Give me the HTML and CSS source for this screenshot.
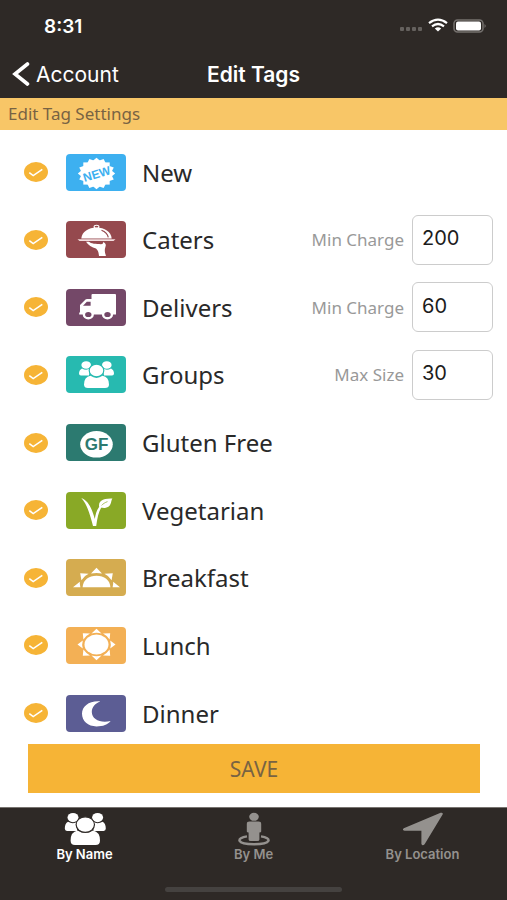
FILE: index.html
```html
<!DOCTYPE html>
<html lang="en">
<head>
  <meta charset="UTF-8">
  <meta name="viewport" content="width=device-width, initial-scale=1">
  <title>Edit Tags</title>
  <link rel="stylesheet" href="styles.css">
</head>
<body>

  <header class="header">
    <div class="status-bar">
      <span class="time">8:31</span>
      <svg class="status-icons" width="88" height="16" viewBox="0 0 88 16">
        <g fill="#65615e">
          <rect x="1" y="9" width="4" height="4" rx="1"/>
          <rect x="7" y="9" width="4" height="4" rx="1"/>
          <rect x="13" y="9" width="4" height="4" rx="1"/>
          <rect x="19" y="9" width="4" height="4" rx="1"/>
        </g>
        <g fill="none" stroke="#fff" stroke-width="2.2">
          <path d="M30 5.2 Q39 -1.8 48 5.2"/>
          <path d="M33 8.4 Q39 3.6 45 8.4"/>
        </g>
        <path d="M35.8 10.4 Q39 8 42.2 10.4 L39 13.4 Z" fill="#fff"/>
        <rect x="55" y="2" width="29" height="12" rx="3.5" fill="#2e2926" stroke="#75716e" stroke-width="1.5"/>
        <rect x="57" y="3.6" width="25" height="8.8" rx="2" fill="#fff"/>
        <path d="M85.5 6 Q88 8 85.5 10 Z" fill="#75716e"/>
      </svg>
    </div>
    <nav class="nav-bar">
      <a class="back" href="#account">
        <svg width="18" height="24" viewBox="0 0 18 24">
          <path d="M15.5 2 L3 12 L15.5 22" fill="none" stroke="#fff" stroke-width="3.6" stroke-linecap="round"/>
        </svg>
        <span>Account</span>
      </a>
      <h1>Edit Tags</h1>
    </nav>
  </header>

  <h2 class="section-title">Edit Tag Settings</h2>

  <form class="form">
    <div class="tag-list">

      <div class="tag-row">
        <span class="check">
          <input type="checkbox" id="new" checked>
          <svg viewBox="0 0 24 20"><path d="M5.3 10.6 L9.2 13.6 L18.3 7.4"/></svg>
        </span>
        <svg class="tag-icon new" viewBox="0 0 60 37">
          <g transform="translate(30.5 19.5) scale(1 .84)" fill="#fff">
            <rect x="-13.2" y="-13.2" width="26.4" height="26.4"/>
            <rect x="-13.2" y="-13.2" width="26.4" height="26.4" transform="rotate(22.5)"/>
            <rect x="-13.2" y="-13.2" width="26.4" height="26.4" transform="rotate(45)"/>
            <rect x="-13.2" y="-13.2" width="26.4" height="26.4" transform="rotate(67.5)"/>
          </g>
          <text class="new-text" x="30.5" y="24" transform="rotate(-17 31 19)">NEW</text>
        </svg>
        <label class="tag-name" for="new">New</label>
      </div>

      <div class="tag-row">
        <span class="check">
          <input type="checkbox" id="caters" checked>
          <svg viewBox="0 0 24 20"><path d="M5.3 10.6 L9.2 13.6 L18.3 7.4"/></svg>
        </span>
        <svg class="tag-icon caters" viewBox="0 0 60 37">
          <ellipse cx="30.5" cy="5.8" rx="2.4" ry="1.6" fill="none" stroke="#fff" stroke-width="1.1"/>
          <path d="M15.3 17.6 C16 10.5 22.5 6.5 30.5 6.5 C38.5 6.5 45 10.5 45.7 17.6 Z" fill="#fff"/>
          <path d="M35.5 9.2 C39.5 10.8 41.6 13.3 42.3 16.4" fill="none" stroke="#95494e" stroke-width="1.2"/>
          <path d="M11.5 18.2 H49.5 L47.5 20 H13.5 Z" fill="#f3dfe0"/>
          <path d="M20 20.8 C22 24 26 26.6 30 27.4 C32.5 29.5 32.7 32 33 35 L40 35 C38.6 31 38.4 28.5 39.4 26 C40.4 23.8 39.6 22.3 37.2 20.8 C37.6 22.2 36.6 23.2 35 23.2 C30 23.2 25 22.6 22.8 20.8 Z" fill="#fff"/>
        </svg>
        <label class="tag-name" for="caters">Caters</label>
        <label class="field-label" for="caters-min">Min Charge</label>
        <input class="field" type="text" inputmode="numeric" id="caters-min" value="200">
      </div>

      <div class="tag-row">
        <span class="check">
          <input type="checkbox" id="delivers" checked>
          <svg viewBox="0 0 24 20"><path d="M5.3 10.6 L9.2 13.6 L18.3 7.4"/></svg>
        </span>
        <svg class="tag-icon delivers" viewBox="0 0 60 37">
          <path d="M26.5 5 H49 Q50 5 50 6 V25.5 H13.2 V23.5 H14 V16 L19.5 10.5 Q20 10 21 10 H25.5 V6 Q25.5 5 26.5 5 Z" fill="#fff"/>
          <path d="M17 16.8 L20.8 12.8 H24.6 V16.8 Z" fill="#744868"/>
          <g fill="#744868" stroke="#fff" stroke-width="2.4">
            <ellipse cx="22.3" cy="25.5" rx="4.4" ry="3.8"/>
            <ellipse cx="41.5" cy="25.5" rx="4.4" ry="3.8"/>
          </g>
        </svg>
        <label class="tag-name" for="delivers">Delivers</label>
        <label class="field-label" for="delivers-min">Min Charge</label>
        <input class="field" type="text" inputmode="numeric" id="delivers-min" value="60">
      </div>

      <div class="tag-row">
        <span class="check">
          <input type="checkbox" id="groups" checked>
          <svg viewBox="0 0 24 20"><path d="M5.3 10.6 L9.2 13.6 L18.3 7.4"/></svg>
        </span>
        <svg class="tag-icon groups" viewBox="0 0 60 37">
          <g fill="#fff">
            <ellipse cx="20.2" cy="9" rx="4.8" ry="3.8"/>
            <ellipse cx="40.8" cy="9" rx="4.8" ry="3.8"/>
            <path d="M16 12.4 Q20 15 24 12.6 L23 19.5 H15 Q13 19.5 13 17.5 Q13 14 16 12.4 Z"/>
            <path d="M45 12.4 Q41 15 37 12.6 L38 19.5 H46 Q48 19.5 48 17.5 Q48 14 45 12.4 Z"/>
          </g>
          <ellipse cx="30.5" cy="14.5" rx="7.3" ry="6.3" fill="#fff" stroke="#27bab0" stroke-width="1.2"/>
          <path d="M24.5 19.8 Q30.5 24 36.5 19.8 Q43 21 43 28.5 Q43 32 39 32 H22 Q18 32 18 28.5 Q18 21 24.5 19.8 Z" fill="#fff"/>
        </svg>
        <label class="tag-name" for="groups">Groups</label>
        <label class="field-label" for="groups-max">Max Size</label>
        <input class="field" type="text" inputmode="numeric" id="groups-max" value="30">
      </div>

      <div class="tag-row">
        <span class="check">
          <input type="checkbox" id="gluten" checked>
          <svg viewBox="0 0 24 20"><path d="M5.3 10.6 L9.2 13.6 L18.3 7.4"/></svg>
        </span>
        <svg class="tag-icon gluten" viewBox="0 0 60 37">
          <ellipse cx="30.5" cy="20.3" rx="16.3" ry="13.3" fill="#fff"/>
          <text class="gf-text" x="30.5" y="26">GF</text>
        </svg>
        <label class="tag-name" for="gluten">Gluten Free</label>
      </div>

      <div class="tag-row">
        <span class="check">
          <input type="checkbox" id="vegetarian" checked>
          <svg viewBox="0 0 24 20"><path d="M5.3 10.6 L9.2 13.6 L18.3 7.4"/></svg>
        </span>
        <svg class="tag-icon vegetarian" viewBox="0 0 60 37">
          <path d="M15.3 6 C22 8.4 26 16.5 28.8 27 C29.8 20.5 31.4 16.4 34.6 13.2 L36 14.4 C33 18.5 31.4 25 30.2 34 H27 C24.2 23 21 12 15.3 6 Z" fill="#fff"/>
          <path d="M33.4 15.8 C31.6 9 37 6.2 46.4 6.6 C44.6 9 46 15.2 39 16 C37.4 16.2 36 15.8 35 15.6 Z" fill="#fff"/>
          <path d="M35.6 13.4 C37 11.8 39 10.5 41.5 9.6" fill="none" stroke="#89a926" stroke-width=".7"/>
        </svg>
        <label class="tag-name" for="vegetarian">Vegetarian</label>
      </div>

      <div class="tag-row">
        <span class="check">
          <input type="checkbox" id="breakfast" checked>
          <svg viewBox="0 0 24 20"><path d="M5.3 10.6 L9.2 13.6 L18.3 7.4"/></svg>
        </span>
        <svg class="tag-icon breakfast" viewBox="0 0 60 37">
          <g fill="#fff">
            <path d="M16.6 28.3 C17 21 22.8 16.8 30.5 16.8 C38.2 16.8 44 21 44.4 28.3 Z"/>
            <path d="M30.5 8.8 L36 14.6 Q30.5 13.4 25 14.6 Z"/>
            <path d="M14.2 14.2 L22.6 14.8 Q17.8 17 15.4 21.2 Z"/>
            <path d="M46.8 14.2 L38.4 14.8 Q43.2 17 45.6 21.2 Z"/>
            <path d="M7 28.3 L13.8 22.8 Q13.6 25 14.4 28.3 Z"/>
            <path d="M54 28.3 L47.2 22.8 Q47.4 25 46.6 28.3 Z"/>
          </g>
        </svg>
        <label class="tag-name" for="breakfast">Breakfast</label>
      </div>

      <div class="tag-row">
        <span class="check">
          <input type="checkbox" id="lunch" checked>
          <svg viewBox="0 0 24 20"><path d="M5.3 10.6 L9.2 13.6 L18.3 7.4"/></svg>
        </span>
        <svg class="tag-icon lunch" viewBox="0 0 60 37">
          <g fill="#fff">
            <ellipse cx="30.5" cy="17.5" rx="12" ry="10"/>
            <path d="M30.5 1.8 L35.5 6.4 Q30.5 5.2 25.5 6.4 Z"/>
            <path d="M30.5 33.2 L35.5 28.6 Q30.5 29.8 25.5 28.6 Z"/>
            <path d="M11.5 17.5 L16.8 13.4 Q15.6 17.5 16.8 21.6 Z"/>
            <path d="M49.5 17.5 L44.2 13.4 Q45.4 17.5 44.2 21.6 Z"/>
            <path d="M16.8 6.2 L24 6.6 Q19.8 8.8 17.4 12.4 Z"/>
            <path d="M44.2 6.2 L37 6.6 Q41.2 8.8 43.6 12.4 Z"/>
            <path d="M16.8 28.8 L24 28.4 Q19.8 26.2 17.4 22.6 Z"/>
            <path d="M44.2 28.8 L37 28.4 Q41.2 26.2 43.6 22.6 Z"/>
          </g>
        </svg>
        <label class="tag-name" for="lunch">Lunch</label>
      </div>

      <div class="tag-row">
        <span class="check">
          <input type="checkbox" id="dinner" checked>
          <svg viewBox="0 0 24 20"><path d="M5.3 10.6 L9.2 13.6 L18.3 7.4"/></svg>
        </span>
        <svg class="tag-icon dinner" viewBox="0 0 60 37">
          <path d="M34.2 6.4 C23 5.6 16 11.4 16 18.8 C16 26 22 31.4 30.5 31.4 C37 31.4 42 29.6 44.6 26 C34.5 28.4 25.8 24.4 25.8 17 C25.8 12 29.4 8 34.2 6.4 Z" fill="#fff"/>
        </svg>
        <label class="tag-name" for="dinner">Dinner</label>
      </div>

    </div>

    <button class="save" type="button">SAVE</button>
  </form>

  <footer class="footer">
    <nav class="tabs">
      <a class="tab active" href="#name">
        <svg width="42" height="34" viewBox="0 0 42 34">
          <g fill="currentColor">
            <ellipse cx="9" cy="5.6" rx="5.5" ry="4.6"/>
            <ellipse cx="33.6" cy="5.6" rx="5.5" ry="4.6"/>
            <path d="M4 9.8 Q9 12.6 13.5 9.8 L13 19 H3 Q.8 19 .8 16.6 Q.8 11.4 4 9.8 Z"/>
            <path d="M38.6 9.8 Q33.6 12.6 29 9.8 L29.6 19 H39.6 Q41.8 19 41.8 16.6 Q41.8 11.4 38.6 9.8 Z"/>
            <path d="M13.6 18.6 Q21.3 23.6 29 18.6 Q36 20 36 28.5 Q36 33 31.5 33 H11 Q6.6 33 6.6 28.5 Q6.6 20 13.6 18.6 Z"/>
            <ellipse cx="21.3" cy="12.6" rx="9.2" ry="7.8" stroke="#2e2926" stroke-width="1.2"/>
          </g>
        </svg>
        <span>By Name</span>
      </a>
      <a class="tab" href="#me">
        <svg width="34" height="34" viewBox="0 0 34 34">
          <path d="M10 24.4 C-1 26 -1 32.2 17 32.2 C35 32.2 35 26 24 24.4" fill="none" stroke="currentColor" stroke-width="2.4"/>
          <g fill="currentColor">
            <ellipse cx="17" cy="4.8" rx="4.8" ry="4"/>
            <path d="M12.5 9.6 H21.5 Q24.2 9.6 24.2 12 V19.4 Q24.2 20.4 22.4 20.4 V27.4 Q22.4 29 20.4 29 H13.6 Q11.6 29 11.6 27.4 V20.4 Q9.8 20.4 9.8 19.4 V12 Q9.8 9.6 12.5 9.6 Z"/>
          </g>
        </svg>
        <span>By Me</span>
      </a>
      <a class="tab" href="#location">
        <svg width="42" height="34" viewBox="0 0 42 34">
          <path d="M1.8 16.2 L38.6 .8 Q41.4 .2 40.6 2.6 L22.6 32.2 Q20.6 34.4 19.4 32 V18.8 H2.6 Q-.4 18 1.8 16.2 Z" fill="currentColor"/>
        </svg>
        <span>By Location</span>
      </a>
    </nav>
    <div class="home-indicator"></div>
  </footer>

</body>
</html>
```

FILE: styles.css
```css
* {
  box-sizing: border-box;
}
body {
  margin: 0;
  min-height: 100vh;
  display: flex;
  flex-direction: column;
  background: #fff;
  color: #292929;
  font-family: "Noto Sans", sans-serif;
}
a {
  color: inherit;
  text-decoration: none;
}
.header {
  background: #2e2926;
  color: #fff;
  font-family: Inter, sans-serif;
}
.status-bar {
  display: flex;
  justify-content: space-between;
  align-items: center;
  height: 52px;
  padding: 0 20px 0 44px;
}
.time {
  font-size: 19px;
  font-weight: 600;
}
.nav-bar {
  display: grid;
  grid-template-columns: 1fr auto 1fr;
  align-items: center;
  height: 46px;
  padding: 0 12px 2px;
}
.back {
  display: flex;
  align-items: center;
  gap: 6px;
  font-size: 21px;
}
.nav-bar h1 {
  margin: 0;
  font-size: 21px;
  font-weight: 600;
}
.section-title {
  margin: 0;
  padding: 0 8px;
  background: #f8c667;
  color: #786343;
  font-size: 17px;
  font-weight: 400;
  line-height: 32px;
}
.form {
  flex: 1;
  display: flex;
  flex-direction: column;
}
.tag-list {
  flex: 1;
  display: flex;
  flex-direction: column;
  justify-content: space-between;
  padding: 17px 14px 6px 24px;
}
.tag-row {
  display: flex;
  align-items: center;
  height: 50px;
}
.check {
  display: grid;
  width: 24px;
  height: 20px;
  margin-right: 18px;
}
.check input,
.check svg {
  grid-area: 1 / 1;
  width: 24px;
  height: 20px;
  margin: 0;
}
.check input {
  appearance: none;
  border-radius: 50%;
  background: #ddd;
  cursor: pointer;
}
.check input:checked {
  background: #f6b436;
}
.check svg {
  fill: none;
  stroke: #fff;
  stroke-width: 1.6;
  pointer-events: none;
}
.tag-icon {
  width: 60px;
  height: 37px;
  margin-right: 16px;
  border-radius: 4px;
}
.new {
  background: #3db0f0;
}
.caters {
  background: #95494e;
}
.delivers {
  background: #744868;
}
.groups {
  background: #27bab0;
}
.gluten {
  background: #2c7a70;
}
.vegetarian {
  background: #89a926;
}
.breakfast {
  background: #d5ac50;
}
.lunch {
  background: #f3b055;
}
.dinner {
  background: #5c5d94;
}
.new-text,
.gf-text {
  font-family: "Liberation Sans", sans-serif;
  font-weight: bold;
  text-anchor: middle;
}
.new-text {
  fill: #3db0f0;
  font-size: 12px;
}
.gf-text {
  fill: #2c7a70;
  font-size: 17px;
}
.tag-name {
  flex: 1;
  font-size: 24px;
}
.field-label {
  margin-right: 8px;
  color: #999;
  font-size: 17px;
}
.field {
  width: 81px;
  height: 50px;
  padding: 0 9px 3px;
  border: 1px solid #ccc;
  border-radius: 6px;
  background: #fff;
  color: #1c1c1c;
  font-family: Inter, sans-serif;
  font-size: 20px;
}
.save {
  margin: 0 27px 14px 28px;
  height: 49px;
  border: none;
  background: #f6b436;
  color: #786343;
  font-family: "Noto Sans", sans-serif;
  font-size: 21px;
  cursor: pointer;
}
.footer {
  border-top: 1px solid #77736f;
  background: #2e2926;
  font-family: Inter, sans-serif;
}
.tabs {
  display: grid;
  grid-template-columns: repeat(3, 1fr);
  padding-top: 4px;
}
.tab {
  display: flex;
  flex-direction: column;
  align-items: center;
  color: #94918e;
  font-size: 13px;
  font-weight: 600;
  line-height: 16px;
}
.tab.active {
  color: #fff;
}
.home-indicator {
  width: 35%;
  height: 5px;
  margin: 25px auto 8px;
  border-radius: 3px;
  background: #454240;
}
```
